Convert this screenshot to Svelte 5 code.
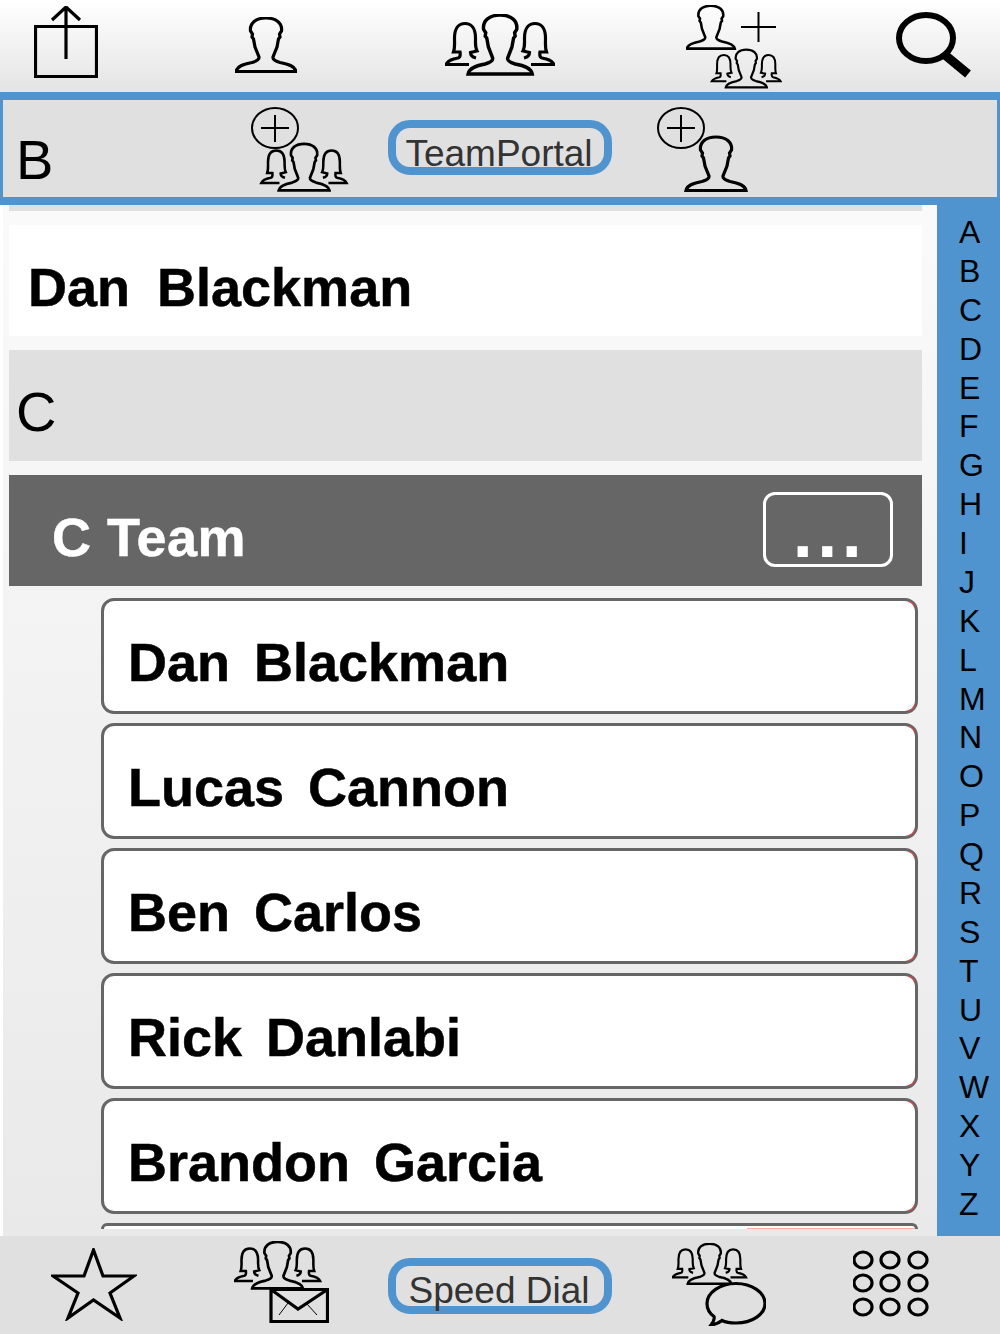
<script>
	const contacts = ['Dan  Blackman', 'Lucas  Cannon', 'Ben  Carlos', 'Rick  Danlabi', 'Brandon  Garcia', ''];
	const letters = 'ABCDEFGHIJKLMNOPQRSTUVWXYZ'.split('');
	const dialRows = [10, 33, 57];
	const dialCols = [10, 37, 65];
</script>

{#snippet person()}
	<path d="M1 54.5H61C60 49 53 47 45 45.5C40 44 37.5 42.5 38 40L42 30L43.5 22L45 20L44.5 17L46.5 14C47.5 6 41 1 31 1C21 1 14.5 6 15.5 14L17.5 17L17 20L18.5 22L20 30L24 40C24.5 42.5 22 44 17 45.5C9 47 2 49 1 54.5Z" />
{/snippet}

{#snippet woman()}
	<path d="M24 50.5H1C3 46 8 45 13 44C15 43.5 15.5 41 15 38H8.5C10 34 9.5 30 9.5 24C9.5 14 14 9.5 20 9.5C26 9.5 30.5 14 30.5 24C30.5 30 30 33 32 37L25.5 38.5C25.5 41 27 43 31 44" />
{/snippet}

{#snippet team()}
	{@render woman()}
	<g transform="translate(110 0) scale(-1 1)">{@render woman()}</g>
	<g transform="translate(22 0) scale(1.07 1.1)">{@render person()}</g>
{/snippet}

{#snippet circlePlus()}
	<ellipse class="thin" cx="24" cy="21" rx="23" ry="20" />
	<path class="thin" d="M10 21H38M24 8V35" />
{/snippet}

<div class="screen">
	<header class="topbar">
		<svg class="ico share" width="64" height="72" viewBox="0 0 64 72">
			<path d="M1.5 20.5H62.5V70.5H1.5ZM32 53V2M18 14L32 1L46 14" />
		</svg>
		<svg class="ico single" width="62" height="56" viewBox="0 0 62 56">{@render person()}</svg>
		<svg class="ico group" width="110" height="63" viewBox="0 0 110 63">{@render team()}</svg>
		<svg class="ico addboth" width="96" height="84" viewBox="0 0 96 84">
			<g transform="scale(0.8)">{@render person()}</g>
			<path class="thin" d="M55 22H90M72.5 7V37" />
			<g transform="translate(25 44) scale(0.64)">{@render team()}</g>
		</svg>
		<svg class="search" width="78" height="66" viewBox="0 0 78 66">
			<ellipse cx="31" cy="26" rx="27" ry="23" />
			<path d="M50 43L73 62" />
		</svg>
	</header>

	<section class="indexbar">
		<span class="indexletter">B</span>
		<svg class="ico addteam" width="98" height="87" viewBox="0 0 98 87">
			{@render circlePlus()}
			<g transform="translate(9.5 36) scale(0.79)">{@render team()}</g>
		</svg>
		<div class="pill teamportal">TeamPortal</div>
		<svg class="ico addperson" width="92" height="85" viewBox="0 0 92 85">
			{@render circlePlus()}
			<g transform="translate(28 29)">{@render person()}</g>
		</svg>
	</section>

	<main class="content">
		<div class="list">
			<div class="strip"></div>
			<div class="row name">Dan  Blackman</div>
			<div class="row header">C</div>
			<div class="row teamrow">
				<span>C Team</span>
				<div class="more">...</div>
			</div>
			<div class="cards">
				{#each contacts as contact}
					<div class="card">{contact}</div>
				{/each}
			</div>
		</div>
		<nav class="alphabet">
			{#each letters as letter}
				<span>{letter}</span>
			{/each}
		</nav>
	</main>

	<footer class="bottombar">
		<svg class="ico star" width="86" height="73" viewBox="0 0 86 73">
			<path d="M42.5 2L52 28H83L59 45L69 70L42.5 52L17 70L27 45L2 28H33Z" />
		</svg>
		<svg class="ico teammail" width="95" height="82" viewBox="0 0 95 82">
			<g transform="scale(0.79)">{@render team()}</g>
			<path d="M37 48.5H93.5V80.5H37ZM37 48.5L64 68L93.5 48.5" />
			<path class="hair" d="M45 74L54 62M83 74L73 63" />
		</svg>
		<div class="pill speeddial">Speed Dial</div>
		<svg class="ico teamchat" width="94" height="83" viewBox="0 0 94 83">
			<g transform="scale(0.68)">{@render team()}</g>
			<path d="M39 82C42 78 42.5 75 42 73.5C37 70 35 66 35 60.5C35 49.5 48 40.5 64 40.5C80 40.5 93 49.5 93 60.5C93 71.5 80 80 64 80C58 80 53 79 50 77.5C47 80 43 81.5 39 82Z" />
		</svg>
		<svg class="ico dial" width="76" height="68" viewBox="0 0 76 68">
			{#each dialRows as cy}
				{#each dialCols as cx}
					<ellipse {cx} {cy} rx="9" ry="8" />
				{/each}
			{/each}
		</svg>
	</footer>
</div>

<style>
	:global(body) {
		background: #fff;
	}

	.screen {
		width: 1000px;
		height: 1334px;
		display: flex;
		flex-direction: column;
		overflow: hidden;
		font-family: 'Liberation Sans', Arial, sans-serif;
		color: #000;
	}

	.ico {
		display: block;
		fill: none;
		stroke: #000;
		stroke-width: 3.2;
	}

	.ico :global(.thin) {
		stroke-width: 2;
	}

	.ico :global(.hair) {
		stroke-width: 1;
	}

	.topbar {
		height: 92px;
		flex: none;
		display: grid;
		grid-template-columns: 132px 268px 200px 268px 132px;
		justify-items: center;
		align-items: start;
		background: linear-gradient(#fff, #e4e4e4);
	}

	.share {
		margin-top: 6px;
	}
	.single {
		margin-top: 17px;
	}
	.group {
		margin-top: 14px;
	}
	.addboth {
		margin-top: 5px;
	}
	.search {
		margin-top: 12px;
		fill: none;
		stroke: #000;
	}
	.search ellipse {
		stroke-width: 6;
	}
	.search path {
		stroke-width: 9;
	}

	.indexbar {
		height: 113px;
		flex: none;
		box-sizing: border-box;
		border: solid #4f94cf;
		border-width: 8px 3px;
		background: #e0e0e0;
		display: grid;
		grid-template-columns: 197px 200px 200px 206px 1fr;
		justify-items: center;
		align-items: start;
	}

	.indexletter {
		justify-self: start;
		margin: 28px 0 0 13px;
		font-size: 56px;
		line-height: 64px;
	}

	.addteam {
		margin-top: 7px;
	}
	.addperson {
		margin-top: 7px;
	}

	.pill {
		box-sizing: border-box;
		width: 224px;
		height: 55px;
		border: 8px solid #4f94cf;
		border-radius: 22px;
		color: #333;
		font-size: 37px;
		line-height: 39px;
		text-align: center;
		padding: 6px 2px 0 0;
		white-space: nowrap;
	}
	.teamportal {
		margin-top: 20px;
	}
	.speeddial {
		height: 56px;
		margin-top: 22px;
		padding-top: 5px;
	}

	.content {
		flex: 1;
		min-height: 0;
		display: flex;
	}

	.list {
		flex: 1;
		min-width: 0;
		margin-left: 3px;
		padding: 0 15px 0 6px;
		display: flex;
		flex-direction: column;
		gap: 14px;
		background: linear-gradient(#fafafa, #e9e9e9);
		overflow: hidden;
	}

	.strip {
		height: 6px;
		flex: none;
		background: #e0e0e0;
	}

	.row {
		height: 111px;
		flex: none;
		box-sizing: border-box;
		white-space: pre;
		line-height: 62px;
		padding-top: 31px;
	}

	.name {
		background: #fff;
		padding-left: 19px;
		font-size: 54px;
		font-weight: 700;
		word-spacing: -1.5px;
		-webkit-text-stroke: 0.5px #000;
	}

	.header {
		background: #e0e0e0;
		padding-left: 7px;
		font-size: 56px;
		font-weight: 400;
	}

	.teamrow {
		background: #666;
		color: #fff;
		padding-left: 43px;
		font-size: 54px;
		font-weight: 700;
		letter-spacing: 0.5px;
		-webkit-text-stroke: 0.5px #fff;
		display: flex;
		justify-content: space-between;
		align-items: flex-start;
	}

	.more {
		box-sizing: border-box;
		width: 130px;
		height: 75px;
		margin: -14px 29px 0 0;
		border: 3px solid #fff;
		border-radius: 12px;
		font-size: 72px;
		line-height: 20px;
		letter-spacing: 4.5px;
		text-align: center;
		padding: 27px 0 0 3px;
		-webkit-text-stroke: 0;
	}

	.cards {
		display: flex;
		flex-direction: column;
		gap: 9px;
		margin: -2px 4px 0 92px;
	}

	.card {
		position: relative;
		box-sizing: border-box;
		height: 116px;
		flex: none;
		background: #fff;
		border: 3px solid #666;
		border-radius: 13px;
		padding: 30px 0 0 24px;
		font-size: 54px;
		line-height: 62px;
		font-weight: 700;
		word-spacing: -3px;
		-webkit-text-stroke: 0.5px #000;
		white-space: pre;
	}

	/* little red nicks on the right corners */
	.card::before,
	.card::after {
		content: '';
		position: absolute;
		right: 0;
		width: 7px;
		height: 7px;
		box-sizing: border-box;
		border-right: 1px solid #e8404a;
	}
	.card::before {
		top: 0;
		border-top: 1px solid #e8404a;
		border-top-right-radius: 10px;
	}
	.card::after {
		bottom: 0;
		border-bottom: 1px solid #e8404a;
		border-bottom-right-radius: 10px;
	}

	/* the row that is cut off by the toolbar */
	.card:last-child {
		height: 6px;
		padding: 0;
		border-bottom: 0;
		border-radius: 13px 13px 0 0;
		overflow: hidden;
	}
	.card:last-child::before {
		display: none;
	}
	.card:last-child::after {
		left: 643px;
		right: 0;
		width: auto;
		height: 1px;
		border: 0;
		border-radius: 0;
		background: #ffa9a9;
	}

	.alphabet {
		flex: none;
		width: 63px;
		box-sizing: border-box;
		padding: 8px 0 0 22px;
		background: #4f94cf;
		display: flex;
		flex-direction: column;
		font-size: 32px;
		line-height: 38.87px;
	}

	.bottombar {
		height: 98px;
		flex: none;
		background: #e0e0e0;
		display: grid;
		grid-template-columns: 187px 188px 250px 188px 155px 32px;
		justify-items: center;
		align-items: start;
	}

	.star {
		margin-top: 12px;
	}
	.teammail {
		margin-top: 5px;
	}
	.teamchat {
		margin-top: 7px;
	}
	.dial {
		margin-top: 14px;
	}
</style>
